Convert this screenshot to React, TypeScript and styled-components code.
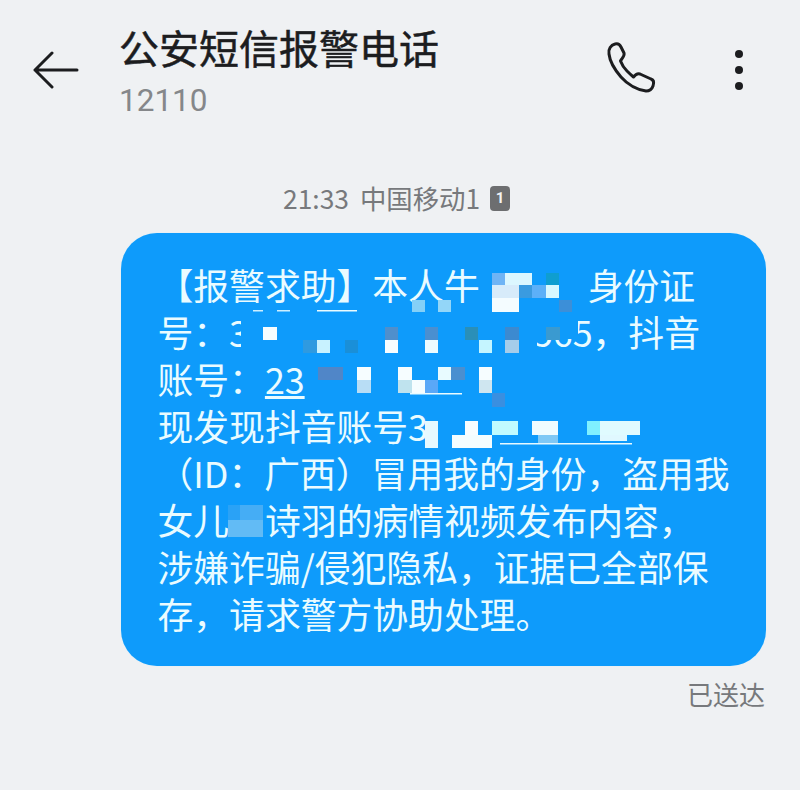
import React from 'react'
import styled, { createGlobalStyle } from 'styled-components'

const GlobalStyle = createGlobalStyle`
  html, body {
    margin: 0;
    padding: 0;
    background: #eff1f3;
  }

  body {
    font-family: "Noto Sans CJK SC", "Noto Sans", sans-serif;
  }
`

const Page = styled.div`
  width: 800px;
  height: 790px;
  overflow: hidden;
  background: #eff1f3;
`

// HEADER
const Header = styled.header`
  display: flex;
  align-items: center;
  padding: 19px 0 0 33px;
`

const BackIcon = styled.svg`
  width: 46px;
  height: 38px;
  flex: none;
  margin: 2px 40px 0 0;
`

const TitleBlock = styled.div`
  flex: 1;
`

const Title = styled.div`
  font-size: 40px;
  line-height: 56px;
  font-weight: 400;
  -webkit-text-stroke: 0.5px #1c1d1f;
  color: #1c1d1f;
`

const Number = styled.div`
  margin-top: 8px;
  font-family: Roboto, sans-serif;
  font-size: 31.5px;
  line-height: 36px;
  color: #85878a;
`

const PhoneIcon = styled.svg`
  width: 64px;
  height: 64px;
  flex: none;
`

const MoreIcon = styled.svg`
  width: 10px;
  height: 44px;
  flex: none;
  margin: 2px 56px 0 70px;
`

// MESSAGE
const TimeRow = styled.div`
  display: flex;
  align-items: center;
  margin-top: 62px;
  padding-left: 283px;
  font-size: 26.4px;
  line-height: 34px;
  color: #77797c;
`

const TimeText = styled.span`
  margin-right: 11px;
`

const SimBadge = styled.span`
  display: flex;
  align-items: center;
  justify-content: center;
  width: 20px;
  height: 25px;
  margin-left: 10px;
  border-radius: 4px;
  background: #6d6e70;
  color: #f4f4f4;
  font-family: Roboto, sans-serif;
  font-size: 15px;
  font-weight: 700;
`

const Bubble = styled.div`
  position: relative;
  box-sizing: border-box;
  width: 645px;
  height: 433px;
  margin: 18px 0 0 121px;
  padding: 28px 0 0 36.5px;
  border-radius: 36px;
  background: #0e9bfb;
  box-shadow: 0 0 1px #bfe9ff;
  color: #eafbff;
  font-size: 35.8px;
  line-height: 47px;
`

const Line = styled.div`
  white-space: nowrap;
`

const Gap = styled.span<{ $width: number }>`
  display: inline-block;
  width: ${props => props.$width}px;
`

const Mosaic = styled.svg`
  position: absolute;
  top: 0;
  left: 0;
  width: 645px;
  height: 433px;
  pointer-events: none;
  filter: blur(0.4px);
`

const Delivered = styled.div`
  margin: 10px 35px 0 0;
  text-align: right;
  font-size: 26px;
  line-height: 36px;
  color: #77797c;
`

const BG = '#0e9bfb'

// pixelated tiles, in page coordinates: x, y, w, h, colour
const tiles: [number, number, number, number, string][] = [
  // soft covers over the hidden digits
  [241, 318, 296, 38, BG],
  [534, 318, 44, 21, BG],
  [306, 360, 190, 22, BG],
  [306, 382, 100, 12, BG],
  [436, 418, 210, 11, BG],
  [436, 429, 76, 16, BG],
  [528, 429, 120, 16, BG],

  // first line
  [412, 300, 13, 12, '#84d0f7'],
  [438, 300, 13, 12, '#93d6f8'],
  [492, 273, 13, 12, '#6fb4f5'],
  [505, 273, 27, 12, '#dcf7ff'],
  [546, 273, 13, 12, '#0f9ed0'],
  [492, 285, 27, 13, '#d7ebfa'],
  [519, 285, 13, 13, '#3a9be0'],
  [532, 285, 14, 13, '#5cb0f8'],
  [546, 285, 13, 13, '#d8f8ff'],
  [492, 298, 27, 14, '#f4fcff'],
  [559, 300, 13, 12, '#3c8fd8'],

  // stray underline bits
  [253, 310, 10, 1.5, '#cdefff'],
  [277, 310, 13, 1.5, '#cdefff'],
  [317, 310, 40, 1.5, '#eafbff'],

  // second line
  [263, 327, 14, 13, '#f6fdff'],
  [303, 340, 14, 13, '#2f9ae0'],
  [317, 340, 13, 13, '#c8f2ff'],
  [345, 340, 13, 13, '#1a8fd8'],
  [385, 327, 13, 13, '#4f8fcc'],
  [385, 340, 13, 13, '#f8fdff'],
  [425, 327, 13, 13, '#4a8fd0'],
  [425, 340, 13, 13, '#ecfbff'],
  [465, 327, 13, 13, '#2a8fb8'],
  [479, 340, 13, 13, '#c5f5ff'],
  [505, 327, 14, 13, '#3c8ad0'],
  [505, 340, 14, 13, '#a5cdea'],
  [546, 327, 14, 13, '#3a9ad0'],

  // third line
  [318, 367, 25, 13, '#5086c8'],
  [357, 367, 14, 13, '#f6fdff'],
  [357, 380, 14, 13, '#b8ddf5'],
  [398, 367, 14, 13, '#f6fdff'],
  [398, 380, 14, 13, '#bfe3ee'],
  [412, 380, 13, 13, '#f6fdff'],
  [425, 380, 13, 13, '#5aa8f8'],
  [438, 367, 13, 13, '#e8fbff'],
  [451, 367, 14, 13, '#4a8fd0'],
  [479, 367, 13, 13, '#f6fdff'],
  [479, 380, 13, 13, '#cfe6f0'],
  [492, 393, 13, 14, '#3a8fe0'],
  [410, 393, 52, 1.5, '#eafbff'],

  // fourth line
  [425, 421, 13, 27, '#e6f9ff'],
  [465, 421, 13, 14, '#f8fdff'],
  [452, 435, 40, 13, '#f4fdff'],
  [492, 421, 26, 14, '#c0fbff'],
  [532, 421, 26, 14, '#f0fcff'],
  [538, 435, 20, 8, '#7fc8f5'],
  [587, 421, 13, 14, '#7ff0ff'],
  [600, 421, 40, 14, '#e0fbff'],
  [600, 435, 27, 6, '#e0f8ff'],
  [500, 443, 132, 1.5, '#e6f9ff'],

  // sixth line, pale blur
  [228, 505, 12, 15, '#2aa2f6'],
  [240, 505, 23, 15, '#45adf5'],
  [228, 520, 35, 17, '#62bbf5'],
]

const App = () => {
  return (
    <Page>
      <GlobalStyle />
      <Header>
        <BackIcon viewBox="0 0 46 38" fill="none" stroke="#1c1d1f" strokeWidth="3" strokeLinecap="round" strokeLinejoin="round">
          <path d="M19 2 L2 19 L19 36 M2 19 H44" />
        </BackIcon>
        <TitleBlock>
          <Title>公安短信报警电话</Title>
          <Number>12110</Number>
        </TitleBlock>
        <PhoneIcon viewBox="0 0 64 64" fill="none" stroke="#1c1d1f" strokeWidth="3" strokeLinejoin="round">
          <path d="M9 17 C8 12 11 8 15 7 C18 6 20 8 21 10 L24 16 C25 19 22 21 20.5 24 C22 28 24 31 27 34 C29 36 31 38 33.5 40 C35 38 37 36 40 37 L51 42 C54 43 54 46 53 49 C52 52 50 54 46 54 C38 53 28 48 21 40 C15 33 10 26 9 17 Z" />
        </PhoneIcon>
        <MoreIcon viewBox="0 0 10 44" fill="#1c1d1f">
          <circle cx="5" cy="6" r="4" />
          <circle cx="5" cy="22" r="4" />
          <circle cx="5" cy="38" r="4" />
        </MoreIcon>
      </Header>

      <TimeRow>
        <TimeText>21:33</TimeText>
        <span>中国移动1</span>
        <SimBadge>1</SimBadge>
      </TimeRow>

      <Bubble>
        <Line>【报警求助】本人牛<Gap $width={108} />身份证</Line>
        <Line>号：3<Gap $width={284} />565，抖音</Line>
        <Line>账号：<u>23</u></Line>
        <Line>现发现抖音账号3</Line>
        <Line>（ID：广西）冒用我的身份，盗用我</Line>
        <Line>女儿<Gap $width={36} />诗羽的病情视频发布内容，</Line>
        <Line>涉嫌诈骗/侵犯隐私，证据已全部保</Line>
        <Line>存，请求警方协助处理。</Line>
        <Mosaic viewBox="121 233 645 433">
          {tiles.map(([x, y, w, h, fill], i) => (
            <rect key={i} x={x} y={y} width={w} height={h} fill={fill} />
          ))}
        </Mosaic>
      </Bubble>

      <Delivered>已送达</Delivered>
    </Page>
  )
}

export default App
